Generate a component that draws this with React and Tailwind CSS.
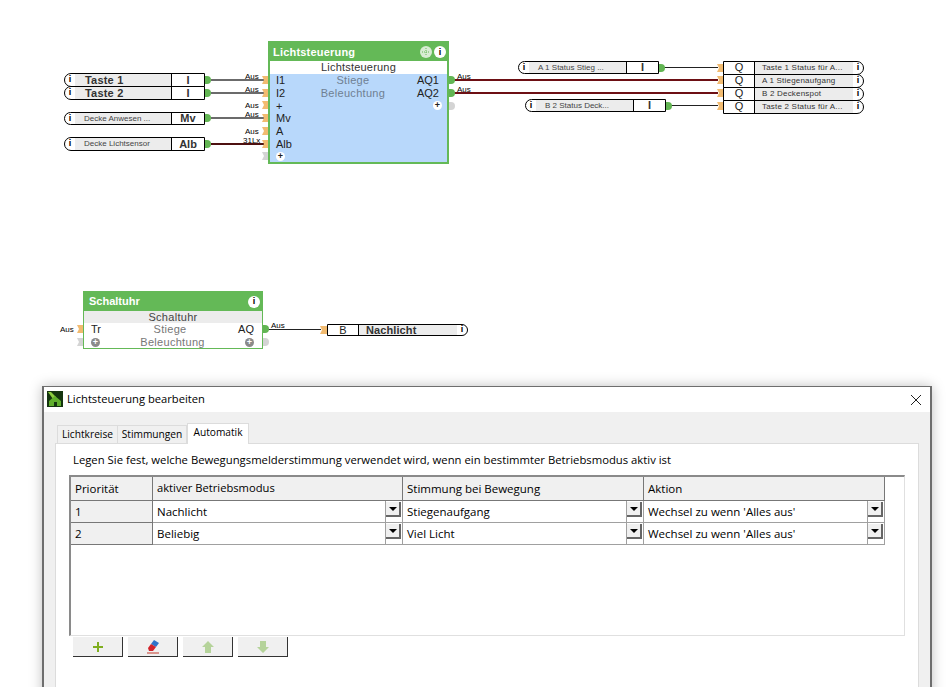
const Dot = ({ className = '' }) => (
  <span className={`flex h-[10px] w-[10px] shrink-0 items-center justify-center rounded-full bg-white text-[8px] font-bold leading-none text-black ${className}`}>i</span>
);

const PlusDot = ({ className = '' }) => (
  <span className={`flex h-[9px] w-[9px] items-center justify-center rounded-full text-[9px] font-bold leading-none ${className}`}>+</span>
);

// notched input port
const InPort = ({ className = '', color = '#f2bb70' }) => (
  <svg width="7" height="8" viewBox="0 0 7 8" className={`absolute ${className}`}>
    <path d="M0 0H7V8H0L2 4Z" fill={color} />
  </svg>
);

const OutPort = ({ className = '', color = '#62b553' }) => (
  <svg width="6" height="8" viewBox="0 0 6 8" className={`absolute ${className}`}>
    <path d="M0 0H2A4 4 0 0 1 2 8H0Z" fill={color} />
  </svg>
);

const Tag = ({ className = '', children }) => (
  <span className={`absolute text-[8px] leading-[9px] text-black ${className}`}>{children}</span>
);

// input pill: info end, grey label, value cell
const InputPill = ({ className = '', label, value, big, cellW = 'w-[33px]' }) => (
  <div className={`absolute flex border border-black bg-white rounded-l-full ${className}`}>
    <span className="flex w-[10px] shrink-0 items-center justify-center text-[9px] font-bold">i</span>
    <span className={`flex min-w-0 flex-1 items-center bg-[#ececec] whitespace-nowrap ${big ? 'pl-[10px] text-[11px] font-bold tracking-[0.2px] text-[#333]' : 'pl-[9px] text-[8px] text-[#444]'}`}>
      {label}
    </span>
    <span className={`flex ${cellW} shrink-0 items-center justify-center border-l border-black text-[11px] font-bold text-[#333]`}>{value}</span>
  </div>
);

const QRow = ({ label }) => (
  <div className="-mt-[1px] flex h-[14px] rounded-r-[7px] border border-black bg-white first:mt-0">
    <span className="flex w-[31px] shrink-0 items-center justify-center border-r border-black pb-[2px] text-[11px] text-[#222]">Q</span>
    <span className="flex min-w-0 flex-1 items-center bg-[#ececec] pl-[7px] text-[8px] tracking-[0.2px] whitespace-nowrap text-[#333]">{label}</span>
    <span className="flex w-[10px] shrink-0 items-center justify-center text-[9px] font-bold">i</span>
  </div>
);

const DropBtn = () => (
  <>
    <span className="absolute bottom-0 right-[16px] top-0 border-l border-[#a0a0a0]" />
    <span className="absolute right-[1px] top-[1px] flex h-[15px] w-[15px] items-center justify-center border-r-2 border-b-2 border-[#666] bg-[#f0f0f0]">
      <svg width="8" height="4" viewBox="0 0 8 4"><path d="M0 0H8L4 4Z" fill="#000" /></svg>
    </span>
  </>
);

const Cell = ({ children }) => (
  <div className="relative flex h-[22px] items-center border-r border-b border-[#a0a0a0] bg-white pl-[4px] text-black">
    {children}
    <DropBtn />
  </div>
);

const ToolBtn = ({ children }) => (
  <div className="flex h-[20px] w-[50px] items-center justify-center border-r border-b border-[#333] bg-[#f0f0f0]">{children}</div>
);

const Wires = () => (
  <svg width="948" height="360" className="absolute left-0 top-0">
    <g stroke="#3a3a3a" strokeWidth="1.5">
      <path d="M211 80H264" />
      <path d="M211 93H264" />
      <path d="M211 118H264" />
    </g>
    <path d="M211 144H264" stroke="#4d1010" strokeWidth="2" />
    <g stroke="#6d0f14" strokeWidth="2">
      <path d="M454 80H718" />
      <path d="M454 93H718" />
    </g>
    <g stroke="#222" strokeWidth="1">
      <path d="M664 67.5H718" />
      <path d="M670 105.5H718" />
      <path d="M268 329.5H321" />
    </g>
  </svg>
);

export default function App() {
  return (
    <div className="relative h-[687px] w-[948px] overflow-hidden bg-white font-['Liberation_Sans',sans-serif]">
      <Wires />

      {/* left inputs */}
      <InputPill className="left-[64px] top-[73px] h-[14px] w-[141px]" label="Taste 1" value="I" big />
      <InputPill className="left-[64px] top-[86px] h-[14px] w-[141px]" label="Taste 2" value="I" big />
      <InputPill className="left-[64px] top-[112px] h-[13px] w-[141px]" label="Decke Anwesen ..." value="Mv" />
      <InputPill className="left-[64px] top-[137px] h-[14px] w-[141px]" label="Decke Lichtsensor" value="Alb" />
      <OutPort className="left-[205px] top-[76px]" />
      <OutPort className="left-[205px] top-[89px]" />
      <OutPort className="left-[205px] top-[114px]" />
      <OutPort className="left-[205px] top-[140px]" />

      <Tag className="left-[245px] top-[72px]">Aus</Tag>
      <Tag className="left-[245px] top-[85px]">Aus</Tag>
      <Tag className="left-[245px] top-[101px]">Aus</Tag>
      <Tag className="left-[245px] top-[110px]">Aus</Tag>
      <Tag className="left-[245px] top-[127px]">Aus</Tag>
      <Tag className="left-[243px] top-[136px]">31Lx</Tag>

      <InPort className="left-[262px] top-[76px]" />
      <InPort className="left-[262px] top-[89px]" />
      <InPort className="left-[262px] top-[101px]" />
      <InPort className="left-[262px] top-[114px]" />
      <InPort className="left-[262px] top-[127px]" />
      <InPort className="left-[262px] top-[140px]" />
      <InPort className="left-[262px] top-[152px]" color="#d4d4d4" />

      {/* Lichtsteuerung block */}
      <div className="absolute left-[268px] top-[41px] flex h-[123px] w-[181px] flex-col border-2 border-[#64b957] bg-[#b8d8fb]">
        <div className="flex h-[18px] shrink-0 items-center justify-between bg-[#64b957] pl-[3px] pr-[1px]">
          <span className="text-[11px] font-bold tracking-[0.2px] text-white">Lichtsteuerung</span>
          <span className="flex gap-[2px]">
            <span className="flex h-[12px] w-[12px] items-center justify-center rounded-full bg-[#d8ecd4]">
              <svg width="8" height="8" viewBox="0 0 8 8"><path d="M4 0V8M0 4H8" stroke="#64b957" strokeWidth="1" strokeDasharray="1 1" /></svg>
            </span>
            <Dot className="h-[12px] w-[12px] text-[9px]" />
          </span>
        </div>
        <div className="flex h-[13px] shrink-0 items-center justify-center bg-white text-[11px] tracking-[0.2px] text-[#333]">Lichtsteuerung</div>
        <div className="relative flex flex-1 justify-between pl-[6px] pr-[8px] text-[11px] leading-[12.8px] text-[#222]">
          <div className="flex flex-col">
            <span>I1</span>
            <span>I2</span>
            <span>+</span>
            <span>Mv</span>
            <span>A</span>
            <span>Alb</span>
            <PlusDot className="mt-[1px] bg-white" />
          </div>
          <div className="-ml-[3px] flex flex-col items-center tracking-[0.3px] text-[#6f7f92]">
            <span>Stiege</span>
            <span>Beleuchtung</span>
          </div>
          <div className="flex flex-col items-end">
            <span>AQ1</span>
            <span>AQ2</span>
            <PlusDot className="-mr-[3px] mt-[1px] bg-white" />
          </div>
        </div>
      </div>
      <OutPort className="left-[449px] top-[76px]" />
      <OutPort className="left-[449px] top-[89px]" />
      <OutPort className="left-[449px] top-[102px]" color="#d4d4d4" />
      <Tag className="left-[457px] top-[72px]">Aus</Tag>
      <Tag className="left-[457px] top-[85px]">Aus</Tag>

      {/* right inputs */}
      <InputPill className="left-[518px] top-[61px] h-[13px] w-[141px]" label="A 1 Status Stieg ..." value="I" cellW="w-[32px]" />
      <InputPill className="left-[525px] top-[99px] h-[13px] w-[141px]" label="B 2 Status Deck..." value="I" cellW="w-[32px]" />
      <OutPort className="left-[659px] top-[64px]" />
      <OutPort className="left-[666px] top-[102px]" />

      <InPort className="left-[717px] top-[64px]" />
      <InPort className="left-[717px] top-[76px]" />
      <InPort className="left-[717px] top-[89px]" />
      <InPort className="left-[717px] top-[102px]" />

      <div className="absolute left-[723px] top-[61px] w-[141px]">
        <QRow label="Taste 1 Status für A..." />
        <QRow label="A 1 Stiegenaufgang" />
        <QRow label="B 2 Deckenspot" />
        <QRow label="Taste 2 Status für A..." />
      </div>

      {/* Schaltuhr block */}
      <Tag className="left-[60px] top-[325px]">Aus</Tag>
      <InPort className="left-[77px] top-[325px]" />
      <InPort className="left-[77px] top-[338px]" color="#d4d4d4" />
      <div className="absolute left-[83px] top-[291px] flex h-[58px] w-[180px] flex-col border border-[#64b957] bg-white">
        <div className="flex h-[19px] shrink-0 items-center justify-between bg-[#64b957] pl-[5px] pr-[2px]">
          <span className="text-[11px] font-bold text-white">Schaltuhr</span>
          <Dot className="h-[12px] w-[12px] text-[9px]" />
        </div>
        <div className="flex h-[12px] shrink-0 items-center justify-center bg-[#ececec] text-[11px] tracking-[0.3px] text-[#444]">Schaltuhr</div>
        <div className="grid flex-1 grid-cols-[1fr_auto_1fr] pl-[7px] pr-[8px] text-[11px] leading-[13px] text-[#222]">
          <div className="flex flex-col">
            <span>Tr</span>
            <PlusDot className="mt-[2px] bg-[#8a8a8a] text-white" />
          </div>
          <div className="flex flex-col items-center tracking-[0.3px] text-[#777]">
            <span className="-ml-[5px]">Stiege</span>
            <span>Beleuchtung</span>
          </div>
          <div className="flex flex-col items-end">
            <span>AQ</span>
            <PlusDot className="mt-[2px] bg-[#8a8a8a] text-white" />
          </div>
        </div>
      </div>
      <OutPort className="left-[263px] top-[325px]" />
      <OutPort className="left-[263px] top-[338px]" color="#d4d4d4" />
      <Tag className="left-[271px] top-[321px]">Aus</Tag>

      <InPort className="left-[320px] top-[326px]" />
      <div className="absolute left-[327px] top-[324px] flex h-[12px] w-[141px] rounded-r-full border border-black bg-white">
        <span className="flex w-[31px] shrink-0 items-center justify-center border-r border-black text-[11px] text-[#222]">B</span>
        <span className="flex flex-1 items-center bg-[#ececec] pl-[7px] text-[11px] font-bold tracking-[0.1px] text-[#333]">Nachlicht</span>
        <span className="flex w-[10px] shrink-0 items-center justify-center text-[9px] font-bold">i</span>
      </div>

      {/* dialog window */}
      <div className="absolute left-[42px] top-[386px] flex h-[320px] w-[890px] flex-col border-2 border-t border-[#6e6e6e] bg-[#f0f0f0] font-['Open_Sans',sans-serif] text-[11.5px] text-black shadow-[0_0_12px_rgba(0,0,0,0.25)]">
        <div className="flex h-[25px] shrink-0 items-center justify-between bg-white pl-[3px] pr-[8px]">
          <div className="flex items-center gap-[4px]">
            <svg width="16" height="16" viewBox="0 0 16 16">
              <rect width="16" height="16" fill="#14340f" />
              <path d="M1 1H4L9 6L6 8Z" fill="#8ccc3f" />
              <path d="M2 15V10L8 5L14 10V15H10V11H7V15Z" fill="#5fae2c" />
            </svg>
            <span className="text-[11.2px]">Lichtsteuerung bearbeiten</span>
          </div>
          <svg width="12" height="12" viewBox="0 0 12 12"><path d="M1 1L11 11M11 1L1 11" stroke="#222" strokeWidth="1" /></svg>
        </div>

        <div className="px-[11px] pt-[10px]">
          <div className="relative z-10 flex h-[21px] items-end pl-[2px] text-[10.2px]">
            <span className="flex h-[18px] w-[61px] items-center justify-center border border-b-0 border-[#dcdcdc] bg-[#f0f0f0]">Lichtkreise</span>
            <span className="flex h-[18px] w-[69px] items-center justify-center border-r border-t border-[#dcdcdc] bg-[#f0f0f0]">Stimmungen</span>
            <span className="-mb-[1px] flex h-[21px] w-[62px] items-center justify-center border border-b-0 border-[#dcdcdc] bg-white pb-[3px]">Automatik</span>
          </div>
          <div className="h-[300px] w-[864px] border border-[#dcdcdc] bg-white pl-[17px] pt-[8px]">
            <p className="h-[23px] text-[11.3px]">Legen Sie fest, welche Bewegungsmelderstimmung verwendet wird, wenn ein bestimmter Betriebsmodus aktiv ist</p>
            <div className="-ml-[4px] h-[161px] w-[836px] border-b border-l-2 border-r border-t-2 border-b-[#e0e0e0] border-l-[#8a8a8a] border-r-[#e0e0e0] border-t-[#8a8a8a]">
              <div className="grid grid-cols-[82px_250px_241px_241px]">
                {['Priorität', 'aktiver Betriebsmodus', 'Stimmung bei Bewegung', 'Aktion'].map((h, i) => (
                  <div key={h} className={`flex h-[24px] items-center border-r border-b border-[#777] bg-[#f0f0f0] pl-[4px] ${i === 1 ? 'text-[11.2px]' : ''}`}>{h}</div>
                ))}
                <div className="flex h-[22px] items-center border-r border-b border-[#777] bg-[#f0f0f0] pl-[4px]">1</div>
                <Cell>Nachlicht</Cell>
                <Cell>Stiegenaufgang</Cell>
                <Cell>Wechsel zu wenn 'Alles aus'</Cell>
                <div className="flex h-[22px] items-center border-r border-b border-[#777] bg-[#f0f0f0] pl-[4px]">2</div>
                <Cell>Beliebig</Cell>
                <Cell>Viel Licht</Cell>
                <Cell>Wechsel zu wenn 'Alles aus'</Cell>
              </div>
            </div>
            <div className="mt-[1px] flex gap-[5px]">
              <ToolBtn>
                <svg width="12" height="12" viewBox="0 0 12 12"><path d="M6 1V11M1 6H11" stroke="#7fae1f" strokeWidth="2" /></svg>
              </ToolBtn>
              <ToolBtn>
                <svg width="14" height="15" viewBox="0 0 14 15">
                  <path d="M8 1L13 4L10 8L5 5Z" fill="#2f73c9" />
                  <path d="M5 5L10 8L7 12H3L2 9Z" fill="#d2232a" />
                  <path d="M1 14H13" stroke="#c23a2a" strokeWidth="1" />
                </svg>
              </ToolBtn>
              <ToolBtn>
                <svg width="14" height="14" viewBox="0 0 14 14"><path d="M7 1L13 7H10V13H4V7H1Z" fill="#b5d39a" /></svg>
              </ToolBtn>
              <ToolBtn>
                <svg width="14" height="14" viewBox="0 0 14 14"><path d="M7 13L13 7H10V1H4V7H1Z" fill="#b5d39a" /></svg>
              </ToolBtn>
            </div>
          </div>
        </div>
      </div>
    </div>
  );
}
